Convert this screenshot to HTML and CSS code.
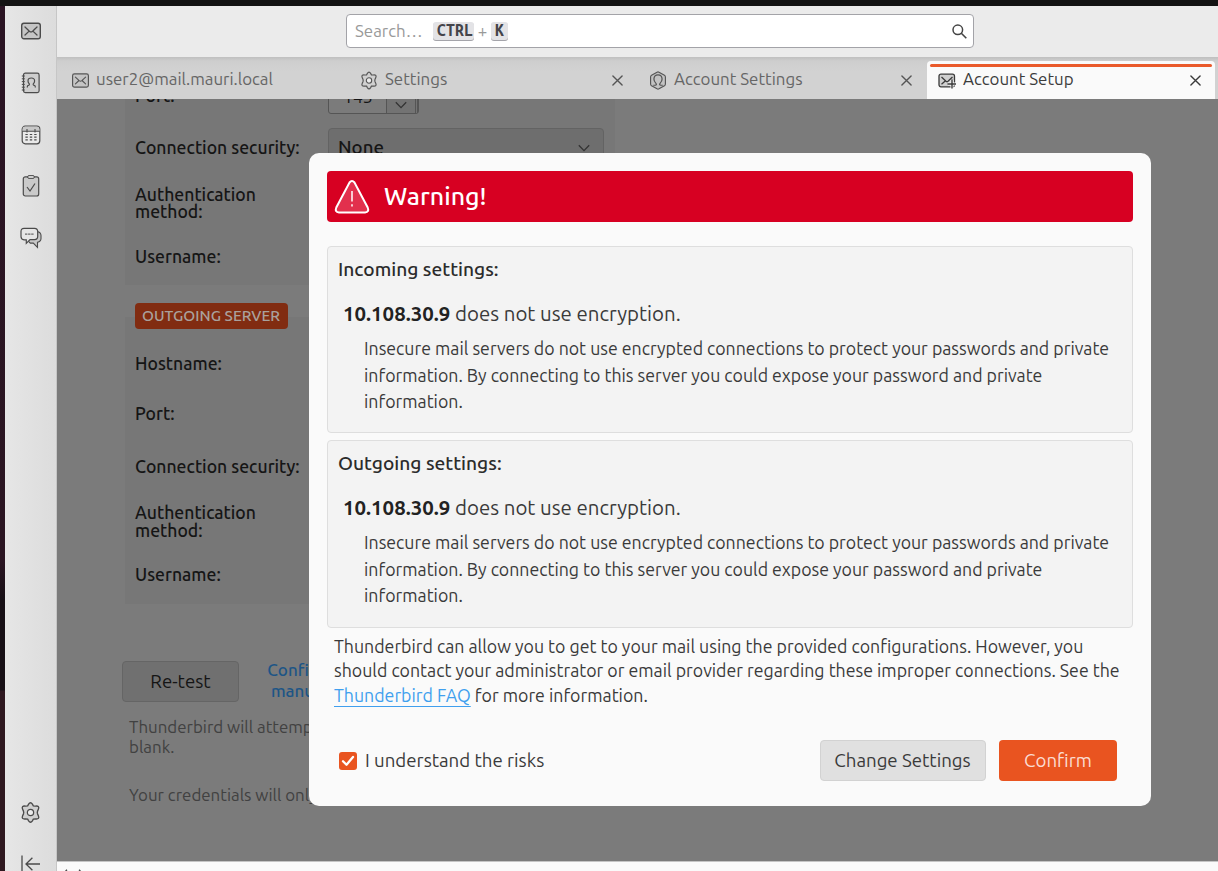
FILE: index.html
```
<!DOCTYPE html>
<html lang="en">
<head>
<meta charset="utf-8">
<title>Account Setup</title>
<link rel="stylesheet" href="styles.css">
</head>
<body>
<svg class="defs" aria-hidden="true">
  <symbol id="mail" viewBox="0 0 20 20"><rect x=".7" y="2.300" width="18.600" height="15.400" rx="2.200" fill="#c5c5c5" stroke="currentColor" stroke-width="1.400"/><path d="M4 6l4.400 4.200q1.600 1.400 3.200 0L16 6M4 14l3.600-3.400M16 14l-3.600-3.400" fill="none" stroke="currentColor" stroke-width="1.300" stroke-linecap="round"/></symbol>
  <symbol id="gear" viewBox="0 0 20 20"><path d="M8.200 2.100Q10-.7 11.800 2.100l.9 1.600 2 .2q4.300-.5 2.800 3l-.8 1.800q-.5 1.300 0 2.600l.8 1.800q1.500 3.500-2.800 3l-2 .2-.9 1.600q-1.800 2.800-3.600 0l-.9-1.600-2-.2q-4.300.5-2.800-3l.8-1.800q.5-1.300 0-2.600l-.8-1.800q-1.500-3.500 2.800-3l2-.2z" fill="#d0d0d0" stroke="currentColor" stroke-width="1.300"/><circle cx="10" cy="10" r="3" fill="#ececec" stroke="currentColor" stroke-width="1.200"/></symbol>
  <symbol id="close" viewBox="0 0 12 12"><path d="M1 1l10 10M11 1L1 11" stroke="currentColor" stroke-width="1.500" stroke-linecap="round"/></symbol>
  <symbol id="chevron" viewBox="0 0 12 8"><path d="M.8 1.200L6 6.600l5.200-5.400" fill="none" stroke="currentColor" stroke-width="1.300"/></symbol>
</svg>
<div class="window">
  <nav class="spaces">
    <svg class="space-icon wide"><use href="#mail"/></svg>
    <svg class="space-icon" viewBox="0 0 20 22"><rect x="2.500" y="1.200" width="15.600" height="19.400" rx="1.800" fill="#cecece" stroke="currentColor" stroke-width="1.200"/><path d="M.8 4h3M.8 6.800h3M.8 9.600h3M.8 12.400h3M.8 15.200h3M.8 18h3" stroke="currentColor"/><path d="M6.300 15.500v-.8q0-1.300 1.700-1.600.7-.3.300-1.300Q7 10.500 7 8.900 7 6 10.300 6t3.300 2.900q0 1.600-1.300 2.900-.4 1 .3 1.300 1.700.3 1.700 1.600v.8" fill="none" stroke="currentColor" stroke-width="1.200"/></svg>
    <svg class="space-icon" viewBox="0 0 20 22"><rect x="1.200" y="2.200" width="17.600" height="17.600" rx="3" fill="#e9e9e9" stroke="currentColor" stroke-width="1.200"/><path d="M1.500 7V5Q1.600 2.600 4 2.600h12q2.300 0 2.500 2.400v2z" fill="#c8c8c8"/><path d="M1.300 7.200h17.400M6 5v3.500M14 5v3.500" stroke="currentColor" stroke-width="1.100"/><path d="M4.400 10.500h2.400M8.800 10.500h2.400M13.200 10.500h2.400M4.400 13.200h2.400M8.800 13.200h2.400M13.200 13.200h2.400M4.400 15.900h2.400M8.800 15.900h2.400M13.200 15.900h2.400" stroke="currentColor" stroke-width="1.200"/></svg>
    <svg class="space-icon" viewBox="0 0 20 22"><rect x="2.300" y="1.800" width="15.400" height="19.200" rx="2" fill="#cacaca" stroke="currentColor" stroke-width="1.200"/><rect x="6.600" y=".6" width="6.800" height="2.800" rx="1.400" fill="#ddd" stroke="currentColor"/><path d="M6 12l3 4 5-7.500" fill="none" stroke="currentColor" stroke-width="1.200"/></svg>
    <svg class="space-icon wide" viewBox="0 0 22 22"><path d="M17 4.500q4 .8 4 4v3q0 3-3.500 3.800v5l-4.200-4.200h-3l-2-2z" fill="#c7c7c7" stroke="currentColor" stroke-width="1.100"/><path d="M4 1.300h10.500q3.200 0 3.200 3.200v5q0 3-3.200 3.200H10l-3.700 3.700v-3.600H4Q1 12.600 1 9.500v-5q0-3.200 3-3.200z" fill="#e6e6e6" stroke="currentColor" stroke-width="1.200"/><path d="M5 7.100h9" stroke="currentColor" stroke-dasharray="2.400 .7"/></svg>
    <svg class="space-icon settings"><use href="#gear"/></svg>
    <svg class="space-icon collapse" viewBox="0 0 20 18"><path d="M1 .5v17M19 9H5M11.400 2.700L5 9l6.400 6.300" fill="none" stroke="currentColor" stroke-width="1.300"/></svg>
  </nav>
  <div class="main">
    <header class="toolbar">
      <div class="search"><span class="hint">Search…</span><kbd class="ctrl">CTRL</kbd><span class="plus">+</span><kbd>K</kbd>
        <svg class="lens" viewBox="0 0 15 15"><circle cx="5.800" cy="5.800" r="4.800" fill="none" stroke="currentColor" stroke-width="1.500"/><path d="M9.300 9.300l5 5" stroke="currentColor" stroke-width="1.600"/></svg>
      </div>
    </header>
    <div class="tabs">
      <div class="tab"><svg class="tab-icon mail-icon"><use href="#mail"/></svg><span>user2@mail.mauri.local</span></div>
      <div class="tab"><svg class="tab-icon"><use href="#gear"/></svg><span>Settings</span><svg class="close"><use href="#close"/></svg></div>
      <div class="tab"><svg class="tab-icon" viewBox="0 0 18 20"><path d="M8 1.200q1-.5 2 0l5.800 3.300q1 .6 1 1.800v7.400q0 1.200-1 1.800L10 18.800q-1 .5-2 0l-5.800-3.300q-1-.6-1-1.800V6.300q0-1.200 1-1.800z" fill="#c3c3c3" stroke="currentColor" stroke-width="1.200"/><path d="M4 15h2q2.200-.5.800-2Q4.700 11 4.700 8.500q.2-4.300 4.300-4.300t4.300 4.300q0 2.500-2.100 4.500-1.400 1.500.8 2h2" fill="none" stroke="currentColor" stroke-width="1.300"/></svg><span>Account Settings</span><svg class="close"><use href="#close"/></svg></div>
      <div class="tab active"><svg class="tab-icon" viewBox="0 0 18 18"><rect x="1" y="2.700" width="15.500" height="12.600" rx="2" fill="#cfcfcf" stroke="currentColor" stroke-width="1.300"/><path d="M3.500 5.500L8 9.800q1 .8 2 0l4.500-4.300M3.500 12.700l3.700-3.200" fill="none" stroke="currentColor" stroke-width="1.300"/><path d="M14 8.500v8M10 12.500h8" stroke="#fafafa" stroke-width="3"/><path d="M14 8v9M9.500 12.500H18" stroke="currentColor" stroke-width="1.400"/></svg><span>Account Setup</span><svg class="close"><use href="#close"/></svg></div>
    </div>
    <main class="content">
      <section class="server incoming">
        <div class="row port"><label>Port:</label><div class="number"><span>143</span><i><svg class="chev"><use href="#chevron"/></svg></i></div></div>
        <div class="row security"><label>Connection security:</label><div class="select"><span>None</span><svg class="chev"><use href="#chevron"/></svg></div></div>
        <div class="row auth"><label>Authentication<br>method:</label></div>
        <div class="row user"><label>Username:</label></div>
      </section>
      <section class="server outgoing">
        <h2 class="badge">OUTGOING SERVER</h2>
        <div class="row host"><label>Hostname:</label></div>
        <div class="row port2"><label>Port:</label></div>
        <div class="row security2"><label>Connection security:</label></div>
        <div class="row auth"><label>Authentication<br>method:</label></div>
        <div class="row user"><label>Username:</label></div>
      </section>
      <div class="actions"><button class="retest">Re-test</button><div class="configure">Configure<br>manually</div></div>
      <p class="note first">Thunderbird will attempt to auto-detect fields that are left<br>blank.</p>
      <p class="note">Your credentials will only be stored locally on your computer.</p>

      <div class="dialog" role="dialog">
        <h1 class="warning"><svg class="triangle" viewBox="0 0 36 34"><path d="M15.500 2.500q2.500-3 5 0l13.200 25q1.800 4.500-2.700 5H5q-4.500-.5-2.700-5z" fill="#e2304d" stroke="#fff" stroke-width="2"/><path d="M18 11v10.500M18 24.200v2.200" stroke="#fff" stroke-width="1.500"/></svg><span>Warning!</span></h1>
        <section class="box">
          <h3>Incoming settings:</h3>
          <p class="server-line"><b>10.108.30.9</b> does not use encryption.</p>
          <p class="insecure">Insecure mail servers do not use encrypted connections to protect your passwords and private<br>information. By connecting to this server you could expose your password and private<br>information.</p>
        </section>
        <section class="box">
          <h3>Outgoing settings:</h3>
          <p class="server-line"><b>10.108.30.9</b> does not use encryption.</p>
          <p class="insecure">Insecure mail servers do not use encrypted connections to protect your passwords and private<br>information. By connecting to this server you could expose your password and private<br>information.</p>
        </section>
        <p class="summary">Thunderbird can allow you to get to your mail using the provided configurations. However, you<br>should contact your administrator or email provider regarding these improper connections. See the<br><a>Thunderbird FAQ</a> for more information.</p>
        <footer class="buttons">
          <div class="check"><svg viewBox="0 0 18 18"><path d="M4 9.300l3.500 3.500L14 5" fill="none" stroke="#fff" stroke-width="2.300" stroke-linecap="round" stroke-linejoin="round"/></svg></div><span class="agree">I understand the risks</span>
          <button class="change">Change Settings</button><button class="confirm">Confirm</button>
        </footer>
      </div>
    </main>
    <div class="status"><svg class="signal" viewBox="0 0 20 14"><path d="M4 .7Q1 3.500 1 7t3 6M16 .7q3 2.800 3 6.300t-3 6M7 3.500Q5.500 5 5.500 7T7 10.500M13 3.500Q14.500 5 14.500 7T13 10.500" fill="none" stroke="currentColor" stroke-width="1.200"/></svg></div>
  </div>
</div>
</body>
</html>
```
FILE: styles.css
```
* { box-sizing: border-box; }
body { margin: 0; width: 1218px; height: 871px; overflow: hidden; background: linear-gradient(#2a1423 0, #2b1522 560px, #171016 600px, #171016 690px, #2f1820 691px); font-family: Ubuntu, "Noto Sans", "Open Sans", sans-serif; color: #3a3a3a; white-space: nowrap; }
h1, h2, h3, p { margin: 0; font-weight: 500; }
p { font-weight: 400; }
.defs { position: absolute; width: 0; height: 0; }
.window { height: 871px; border-top: 6px solid #131313; padding-left: 5px; display: flex; }
.spaces { width: 52px; flex: none; height: 865px; padding: 15px 0 0; background: linear-gradient(90deg, #e6e6e6, #dcdcdc); border-right: 1px solid #c6c6c6; display: flex; flex-direction: column; align-items: center; color: #4b4b4b; }
.space-icon { width: 20px; height: 22px; flex: none; margin-bottom: 29.5px; }
.space-icon.wide { width: 22px; }
.space-icon.wide:first-child { height: 20px; margin-bottom: 31px; }
.space-icon.settings { height: 21px; width: 21px; margin-top: auto; margin-bottom: 32px; }
.space-icon.collapse { height: 18px; margin-bottom: -2px; }
.main { flex: 1; min-width: 0; display: flex; flex-direction: column; }
.toolbar { height: 51px; background: #ebebeb; padding: 8px 0 0 289px; }
.search { width: 628px; height: 34px; border: 1px solid #a3a3a8; border-radius: 4px; background: #fff; display: flex; align-items: center; padding: 0 6px 0 8px; font-size: 16.9px; color: #999; }
.hint { width: 78px; margin-top: -2px; }
kbd { height: 18px; padding: 0 4px; background: #e3e3e6; border-radius: 3px; box-shadow: 0 1px 0 #a4a4aa; font: 700 16px/17px "Ubuntu Mono", "Liberation Mono", monospace; color: #44444a; margin-top: -1px; }
kbd.ctrl { width: 41px; }
.plus { width: 17px; text-align: center; margin-top: -1px; }
.lens { width: 15px; height: 15px; margin-left: auto; color: #444; }
.tabs { height: 42px; background: linear-gradient(#bfbfbf, #cecece 4px, #d2d2d2 14px); display: flex; padding: 4px 0 0 4px; }
.tab { width: 289px; flex: none; display: flex; align-items: center; padding: 0 15px 2px 11px; font-size: 16.9px; color: #666; }
.tab span { margin-top: -1px; }
.tab:first-child { width: 288px; }
.tab-icon { width: 18px; height: 19px; margin-right: 7px; margin-top: 3px; color: #555; }
.tab-icon.mail-icon { width: 17px; height: 17px; margin-left: -.5px; margin-right: 7.5px; }
.close { width: 11px; height: 11px; margin-left: auto; margin-top: 3px; color: #555; }
.tab.active { width: 288px; background: #fafafa; border-radius: 4px 4px 0 0; color: #3c3c3c; position: relative; padding-right: 14px; }
.tab.active::before { content: ""; position: absolute; top: 3px; left: 3px; right: 3px; height: 3px; background: #ea5a2b; border-radius: 2px; }
.tab.active .tab-icon, .tab.active .close { color: #3a3a3a; }
.content { height: 762px; background: #7b7b7b; position: relative; overflow: hidden; padding-left: 68px; color: #151515; }
.server { width: 490px; background: #777; padding-left: 10px; font-size: 17.6px; font-weight: 530; }
.row { display: flex; align-items: center; }
.row label { width: 193px; flex: none; line-height: 17.5px; }
.incoming { height: 186px; overflow: hidden; }
.port { height: 36px; margin-top: -21px; }
.number { width: 91px; height: 36px; border: 1px solid #555; border-radius: 3px; display: flex; align-items: center; background: #7b7b7b; font-weight: 400; }
.number span { width: 57px; padding-left: 14px; }
.number i { flex: 1; height: 34px; border-left: 1px solid #555; border-right: 3px double #555; background: #737373; display: flex; justify-content: center; align-items: flex-end; padding-bottom: 4px; }
.chev { width: 12px; height: 8px; color: #333; }
.security { height: 40px; margin-top: 14px; }
.select { width: 276px; height: 40px; border: 1px solid #636363; border-radius: 4px; background: #6e6e6e; display: flex; align-items: center; justify-content: space-between; padding: 0 13px 0 9px; font-size: 18.67px; }
.select span { margin-top: -2px; }
.auth { height: 70px; }
.user { height: 38px; }
.outgoing { margin-top: 32px; height: 287px; }
.badge { width: 153px; height: 26px; position: relative; top: -14px; background: #812c11; border-radius: 4px; color: #aaa19d; font-size: 15.3px; line-height: 26px; padding-left: 7px; }
.host { height: 41px; }
.port2 { height: 59px; }
.security2 { height: 47px; }
.outgoing .auth { height: 63px; }
.outgoing .user { height: 44px; }
.actions { display: flex; margin: 57px 0 0 -3px; }
button { font-family: inherit; padding: 0 0 1px; border-radius: 4px; }
.retest { width: 117px; height: 41px; background: #707070; border: 1px solid #656565; font-size: 18.67px; color: #151515; }
.configure { margin: -1px 0 0 26px; width: 82px; text-align: center; font-size: 17px; line-height: 20.5px; font-weight: 540; color: #1d5586; }
.note { margin: 27px 0 0 4px; font-size: 16.9px; line-height: 20.5px; color: #414141; }
.note.first { margin-top: 14.5px; }
.dialog { position: absolute; left: 252px; top: 54px; width: 842px; height: 653px; border-radius: 10px; background: #fafafa; padding: 18px 18px 0; color: #3a3a3a; }
.warning { height: 51px; background: #d70022; color: #fff; border-radius: 4px; display: flex; align-items: center; padding: 0 0 1px 6.5px; font-size: 25px; }
.triangle { width: 36px; height: 34px; margin: 1px 14.5px 0 0; }
.warning + .box { margin-top: 24px; height: 187px; }
.box { height: 188px; margin-top: 7px; border: 1px solid #dedede; border-radius: 4px; background: #f3f3f3; padding: 10px 0 0 10px; }
h3 { font-size: 19.2px; line-height: 25px; font-weight: 550; color: #2b2b2b; }
.server-line { margin: 18px 0 0 5px; font-size: 20.45px; line-height: 28px; }
.server-line b { color: #222; }
.insecure { margin: 7px 0 0 26px; font-size: 17.73px; line-height: 26.6px; }
.summary { margin: 5.5px 0 0 7px; font-size: 17.74px; line-height: 24.5px; }
.summary a { color: #409fee; text-decoration: underline; text-underline-offset: 4px; }
.buttons { display: flex; align-items: center; margin-top: 33px; padding: 0 16px 0 12px; height: 41px; }
.check { width: 18px; height: 18px; background: #e95420; border-radius: 3px; margin-top: 1px; }
.check svg { display: block; width: 18px; height: 18px; }
.agree { font-size: 18.67px; margin-left: 8px; margin-top: -1px; }
.change { width: 166px; height: 41px; margin-left: auto; background: #e0e0e0; border: 1px solid #d2d2d2; font-size: 18.67px; color: #3a3a3a; }
.confirm { width: 118px; height: 41px; margin-left: 13.5px; background: #e95420; border: 0; font-size: 18.67px; color: #fbdcd2; }
.status { height: 10px; background: #fafafa; border-top: 1px solid #c5c5c5; padding: 7px 0 0 6px; overflow: hidden; color: #444; }
.signal { display: block; width: 20px; height: 14px; }
```
